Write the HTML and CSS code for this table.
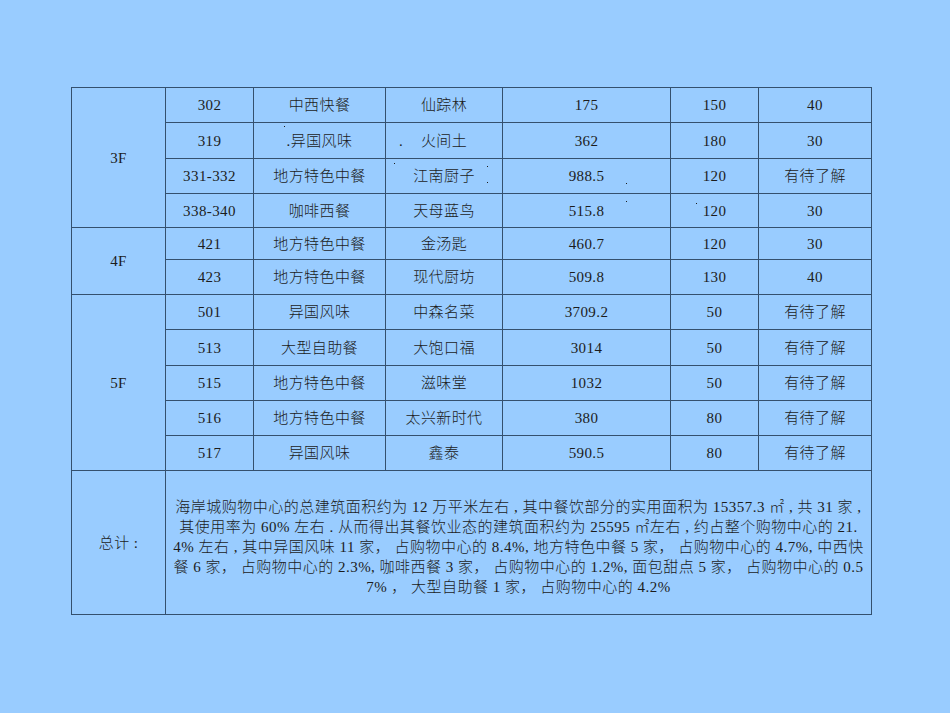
FILE: index.html
```html
<!DOCTYPE html>
<html lang="zh">
<head>
<meta charset="utf-8">
<link rel="stylesheet" href="styles.css">
</head>
<body>
<div class="page">
<table class="grid">
  <colgroup>
    <col class="c1"><col class="c2"><col class="c3"><col class="c4"><col class="c5"><col class="c6"><col class="c7">
  </colgroup>
  <tr class="h35"><td rowspan="4">3F</td><td>302</td><td>中西快餐</td><td>仙踪林</td><td>175</td><td>150</td><td>40</td></tr>
  <tr class="h36"><td>319</td><td class="rel"><span class="dot d1"></span>.异国风味</td><td class="rel"><span class="lead">.</span>火间土</td><td>362</td><td>180</td><td>30</td></tr>
  <tr class="h35"><td>331-332</td><td>地方特色中餐</td><td class="rel"><span class="dot d2"></span><span class="dot d3"></span><span class="dot d4"></span>江南厨子</td><td class="rel">988.5<span class="dot d5"></span></td><td>120</td><td>有待了解</td></tr>
  <tr class="h34"><td>338-340</td><td>咖啡西餐</td><td>天母蓝鸟</td><td class="rel">515.8<span class="dot d6"></span></td><td class="rel"><span class="dot d7"></span>120</td><td>30</td></tr>
  <tr class="h32"><td rowspan="2">4F</td><td>421</td><td>地方特色中餐</td><td>金汤匙</td><td>460.7</td><td>120</td><td>30</td></tr>
  <tr class="h35"><td>423</td><td>地方特色中餐</td><td>现代厨坊</td><td>509.8</td><td>130</td><td>40</td></tr>
  <tr class="h35"><td rowspan="5">5F</td><td>501</td><td>异国风味</td><td>中森名菜</td><td>3709.2</td><td>50</td><td>有待了解</td></tr>
  <tr class="h36"><td>513</td><td>大型自助餐</td><td>大饱口福</td><td>3014</td><td>50</td><td>有待了解</td></tr>
  <tr class="h35"><td>515</td><td>地方特色中餐</td><td>滋味堂</td><td>1032</td><td>50</td><td>有待了解</td></tr>
  <tr class="h35"><td>516</td><td>地方特色中餐</td><td>太兴新时代</td><td>380</td><td>80</td><td>有待了解</td></tr>
  <tr class="h35"><td>517</td><td>异国风味</td><td>鑫泰</td><td>590.5</td><td>80</td><td>有待了解</td></tr>
  <tr class="h144">
    <td>总计 :</td>
    <td colspan="6" class="summary">
      <span class="line">海岸城购物中心的总建筑面积约为 12 万平米左右 , 其中餐饮部分的实用面积为 15357.3 ㎡ , 共 31 家 ,</span>
      <span class="line">其使用率为 60% 左右 . 从而得出其餐饮业态的建筑面积约为 25595 ㎡左右 , 约占整个购物中心的 21.</span>
      <span class="line">4% 左右 , 其中异国风味 11 家， 占购物中心的 8.4%, 地方特色中餐 5 家， 占购物中心的 4.7%, 中西快</span>
      <span class="line">餐 6 家， 占购物中心的 2.3%, 咖啡西餐 3 家， 占购物中心的 1.2%, 面包甜点 5 家， 占购物中心的 0.5</span>
      <span class="line">7% ， 大型自助餐 1 家， 占购物中心的 4.2%</span>
    </td>
  </tr>
</table>
</div>
</body>
</html>
```

FILE: styles.css
```css
html, body {
  margin: 0;
  padding: 0;
  background: #99ccff;
}
.page {
  width: 950px;
  height: 713px;
  padding: 87px 0 0 71px;
  box-sizing: border-box;
  background: #99ccff;
}
.grid {
  border-collapse: collapse;
  table-layout: fixed;
  width: 801px;
  font-family: "Liberation Serif", "Noto Sans CJK SC", serif;
  font-size: 15px;
  font-weight: 300;
  color: #1c1c1c;
}
.c1 { width: 94px; }
.c2 { width: 88px; }
.c3 { width: 132px; }
.c4 { width: 117px; }
.c5 { width: 168px; }
.c6 { width: 88px; }
.c7 { width: 113px; }
.grid td {
  border: 1px solid #34506e;
  text-align: center;
  vertical-align: middle;
  padding: 0;
  line-height: 18px;
  letter-spacing: 0.4px;
}
.h32 { height: 32px; }
.h34 { height: 34px; }
.h35 { height: 35px; }
.h36 { height: 36px; }
.h144 { height: 144px; }
.grid td.summary {
  padding-top: 8px;
}
.summary .line {
  display: block;
  white-space: nowrap;
  line-height: 20px;
  letter-spacing: 0.5px;
}
.rel { position: relative; }
.lead {
  display: inline-block;
  width: 22px;
  text-align: left;
  margin-left: -22px;
}
.dot {
  position: absolute;
  width: 1px;
  height: 1px;
  background: #1c1c1c;
}
.d1 { left: 30px; top: 3px; }
.d2 { left: 8px; top: 4px; }
.d3 { left: 101px; top: 7px; }
.d4 { left: 101px; top: 23px; }
.d5 { left: 123px; top: 24px; }
.d6 { left: 123px; top: 7px; }
.d7 { left: 25px; top: 9px; }
```
